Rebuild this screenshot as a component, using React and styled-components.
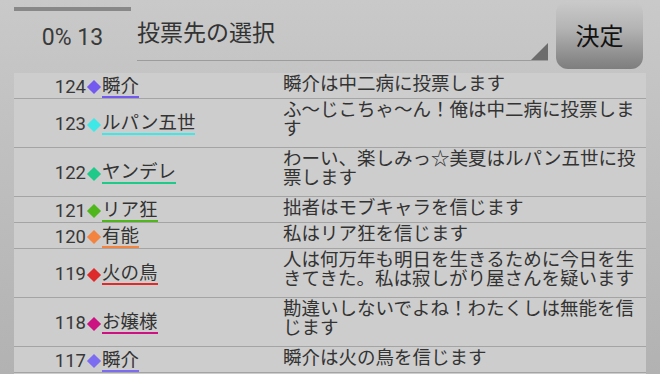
import styled, { createGlobalStyle } from "styled-components";

const GlobalStyle = createGlobalStyle`
  html, body {
    margin: 0;
    padding: 0;
  }
  body {
    min-height: 374px;
    background: linear-gradient(to bottom, #c9c9c9 0%, #c2c2c2 30%, #b2b2b2 100%);
    font-family: "Roboto", "Noto Sans CJK JP", sans-serif;
    color: #333;
    overflow: hidden;
  }
`;

const votes = [
  { no: 124, color: "#7459f0", name: "瞬介", msg: "瞬介は中二病に投票します" },
  { no: 123, color: "#3ee8e6", name: "ルパン五世", msg: "ふ〜じこちゃ〜ん！俺は中二病に投票します", lines: 2 },
  { no: 122, color: "#1ec98a", name: "ヤンデレ", msg: "わーい、楽しみっ☆美夏はルパン五世に投票します", lines: 2 },
  { no: 121, color: "#4fb61c", name: "リア狂", msg: "拙者はモブキャラを信じます" },
  { no: 120, color: "#f2843f", name: "有能", msg: "私はリア狂を信じます" },
  { no: 119, color: "#dd2a2a", name: "火の鳥", msg: "人は何万年も明日を生きるために今日を生きてきた。私は寂しがり屋さんを疑います", lines: 2 },
  { no: 118, color: "#cc1180", name: "お嬢様", msg: "勘違いしないでよね！わたくしは無能を信じます", lines: 2 },
  { no: 117, color: "#7c6cf2", name: "瞬介", msg: "瞬介は火の鳥を信じます" },
];

function App() {
  return (
    <>
      <GlobalStyle />
      <Screen>
        <Header>
          <Progress>
            <ProgressBar />
            <Counter>0% 13</Counter>
          </Progress>
          <Select>
            <SelectLabel>投票先の選択</SelectLabel>
            <SelectArrow />
          </Select>
          <DecideButton>決定</DecideButton>
        </Header>
        <VoteList>
          {votes.map((v, i) => (
            <VoteRow key={i}>
              <Who>
                <Num>{v.no}</Num>
                <Diamond $color={v.color} />
                <Name $color={v.color}>{v.name}</Name>
              </Who>
              <Message $lines={v.lines || 1}>{v.msg}</Message>
            </VoteRow>
          ))}
        </VoteList>
      </Screen>
    </>
  );
}

export default App;

const Screen = styled.div`
  width: 660px;
  height: 374px;
  display: flex;
  flex-direction: column;
`;

const Header = styled.div`
  height: 73px;
  display: flex;
  align-items: flex-start;
  padding-left: 14px;
  box-sizing: border-box;
`;

const Progress = styled.div`
  width: 117px;
  display: flex;
  flex-direction: column;
  align-items: center;
  padding-top: 7px;
`;

const ProgressBar = styled.div`
  width: 100%;
  height: 4px;
  background: #888;
`;

const Counter = styled.div`
  margin-top: 13px;
  font-size: 23px;
  line-height: 28px;
  color: #3a3a3a;
`;

const Select = styled.div`
  position: relative;
  flex: 1;
  margin-left: 6px;
  height: 61px;
  border-bottom: 1px solid #9c9c9c;
  box-sizing: border-box;
  padding-top: 19px;
`;

const SelectLabel = styled.span`
  display: block;
  font-size: 23px;
  line-height: 30px;
  color: #333;
`;

const SelectArrow = styled.div`
  position: absolute;
  right: 0;
  bottom: 0;
  width: 0;
  height: 0;
  border-left: 17px solid transparent;
  border-bottom: 17px solid #6c6c6c;
`;

const DecideButton = styled.div`
  width: 87px;
  height: 68px;
  margin: 1px 17px 0 8px;
  border-radius: 12px;
  background: linear-gradient(to bottom, #cacaca 0%, #b4b4b4 40%, #8a8a8a 85%, #7e7e7e 100%);
  display: flex;
  align-items: center;
  justify-content: center;
  font-size: 24px;
  color: #111;
  padding-bottom: 2px;
  box-sizing: border-box;
`;

const VoteList = styled.div`
  margin: 0 14px;
  background: #cdcdcd;
  flex: 1;
`;

const VoteRow = styled.div`
  display: grid;
  grid-template-columns: 269px 1fr;
  border-bottom: 1px solid #a4a4a4;
`;

const Who = styled.div`
  display: flex;
  align-items: center;
  padding-top: 3px;
  font-size: 18.5px;
  line-height: 19px;
`;

const Num = styled.span`
  width: 72px;
  text-align: right;
  color: #383838;
`;

const Diamond = styled.span`
  width: 10px;
  height: 10px;
  margin: 0 3px 0 3px;
  background: ${(p) => p.$color};
  transform: rotate(45deg);
`;

const Name = styled.span`
  display: inline-block;
  border-bottom: 2px solid ${(p) => p.$color};
  color: #333;
`;

const Message = styled.div`
  font-size: 18.5px;
  line-height: 19px;
  padding: 2px 4px ${(p) => (p.$lines > 1 ? 8 : 4)}px 0;
  color: #333;
`;
